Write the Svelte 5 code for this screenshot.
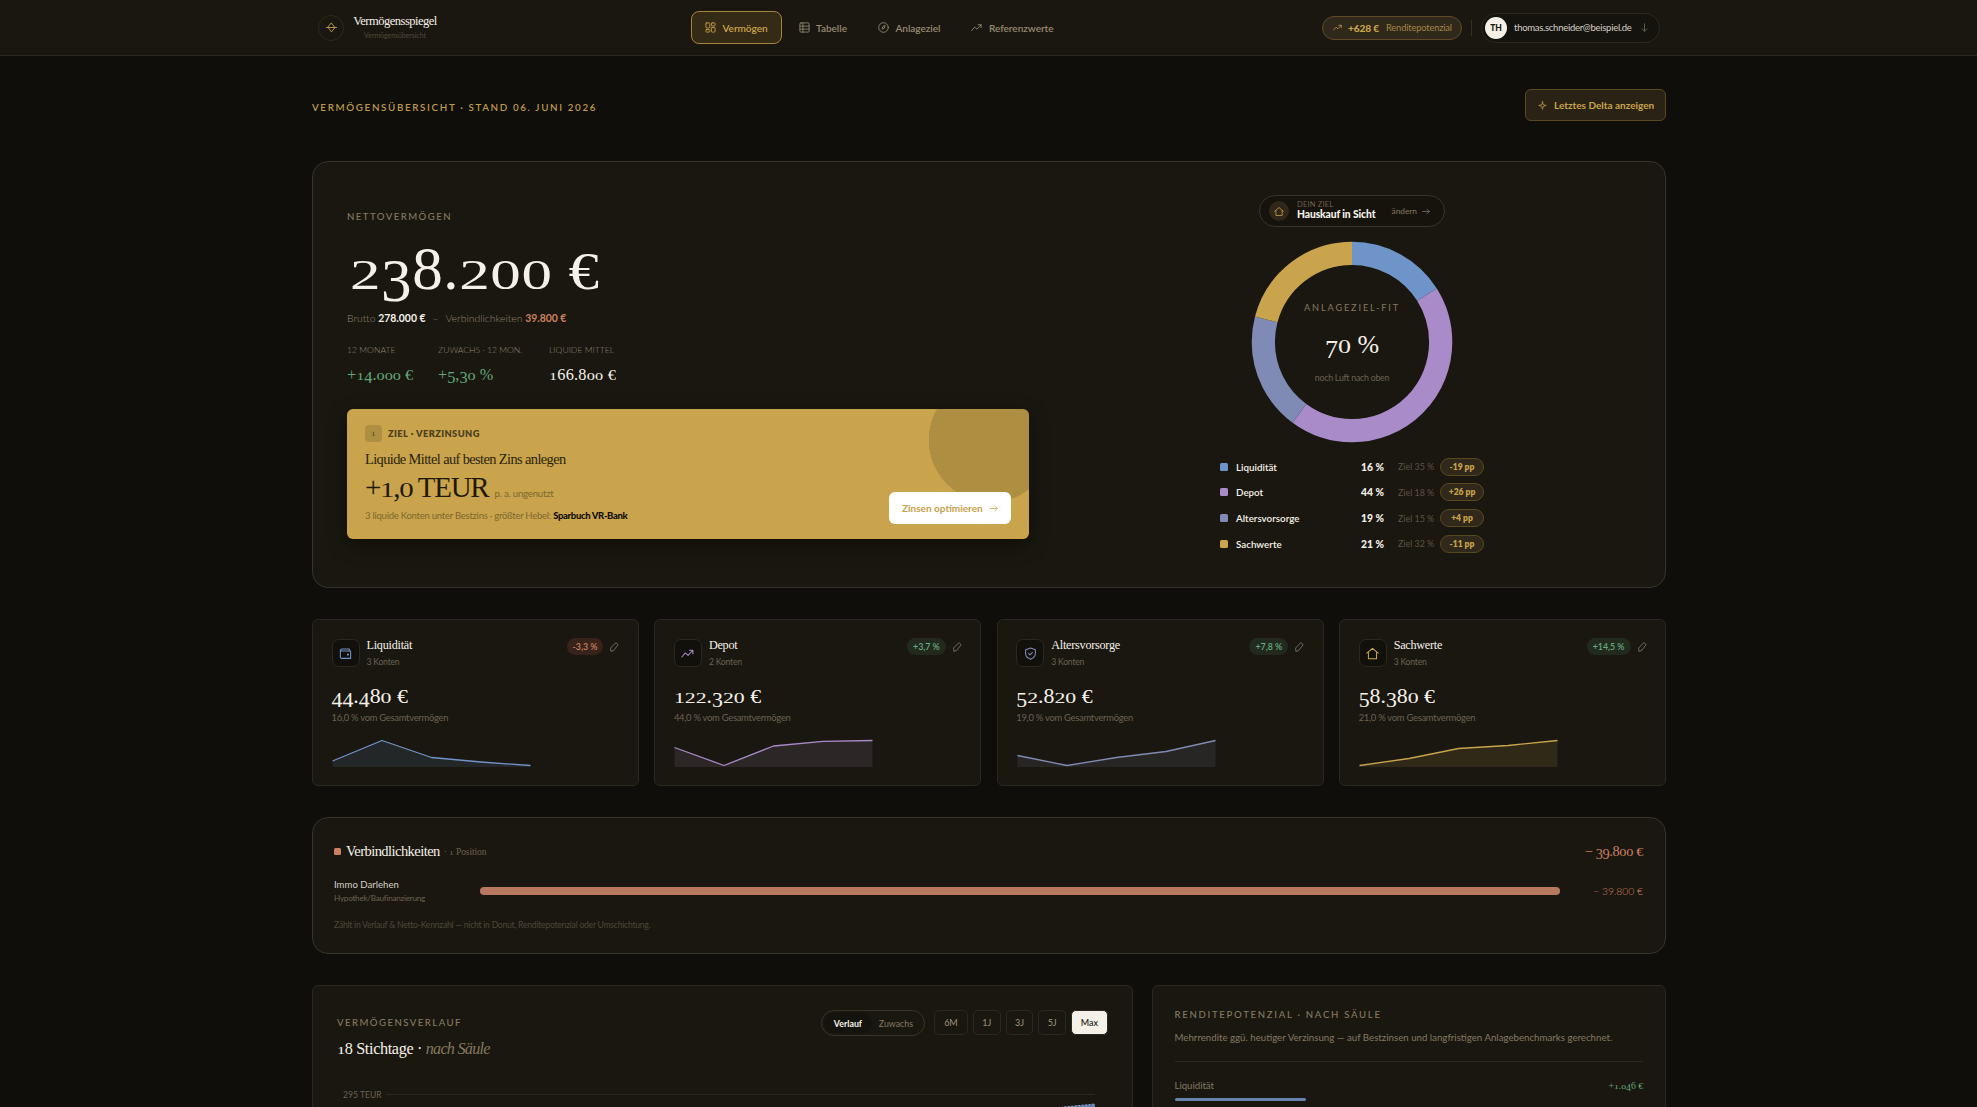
<script lang="ts">
	type Point = [number, number];

	const nav = [
		{ label: 'Vermögen', icon: 'grid' },
		{ label: 'Tabelle', icon: 'table' },
		{ label: 'Anlageziel', icon: 'compass' },
		{ label: 'Referenzwerte', icon: 'trend' }
	];

	const pillars = [
		{ name: 'Liquidität', share: 16, target: 35, diff: '-19 pp', color: '#6f94c9' },
		{ name: 'Depot', share: 44, target: 18, diff: '+26 pp', color: '#a98bca' },
		{ name: 'Altersvorsorge', share: 19, target: 15, diff: '+4 pp', color: '#808bb5' },
		{ name: 'Sachwerte', share: 21, target: 32, diff: '-11 pp', color: '#c9a44c' }
	];

	const cards: {
		name: string;
		icon: string;
		count: number;
		change: string;
		value: string;
		share: string;
		color: string;
		points: Point[];
	}[] = [
		{
			name: 'Liquidität',
			icon: 'wallet',
			count: 3,
			change: '-3,3 %',
			value: '44.480 €',
			share: '16,0',
			color: '#6f94c9',
			points: [[0.5, 22], [50, 1.5], [99.5, 18.5], [149, 23], [198.5, 26.5]]
		},
		{
			name: 'Depot',
			icon: 'trend',
			count: 2,
			change: '+3,7 %',
			value: '122.320 €',
			share: '44,0',
			color: '#a98bca',
			points: [[0.5, 8.5], [50, 26.5], [99.5, 7], [149, 2.3], [198.5, 1.5]]
		},
		{
			name: 'Altersvorsorge',
			icon: 'shield',
			count: 3,
			change: '+7,8 %',
			value: '52.820 €',
			share: '19,0',
			color: '#808bb5',
			points: [[0.5, 16.5], [50, 26.5], [99.5, 18.5], [149, 12.5], [198.5, 1.5]]
		},
		{
			name: 'Sachwerte',
			icon: 'home',
			count: 3,
			change: '+14,5 %',
			value: '58.380 €',
			share: '21,0',
			color: '#c9a44c',
			points: [[0.5, 26.5], [50, 19.5], [99.5, 9.5], [149, 6.5], [198.5, 1.5]]
		}
	];

	const ranges = ['6M', '1J', '3J', '5J', 'Max'];
	let range = $state('Max');
	let mode = $state('Verlauf');

	const R = 88.7;
	const LEN = 2 * Math.PI * R;
	const segments = pillars.map((p, i) => ({
		color: p.color,
		dash: (p.share / 100) * LEN,
		offset: -(pillars.slice(0, i).reduce((sum, x) => sum + x.share, 0) / 100) * LEN
	}));

	const line = (pts: Point[]) => pts.map((p) => p.join(',')).join(' ');

	// old-style figures: 0-2 sit at x-height, 3 4 5 7 9 hang below the baseline
	function figure(ch: string) {
		if ('012'.includes(ch)) return 'low';
		if ('34579'.includes(ch)) return 'hang';
		if (ch === '€') return 'euro';
		return '';
	}
</script>

{#snippet figures(text: string)}{#each text as ch}{#if figure(ch)}<span class="fig {figure(ch)}">{ch}</span>{:else}{ch}{/if}{/each}{/snippet}

{#snippet icon(name: string)}
	<svg class="icon" viewBox="0 0 24 24">
		{#if name === 'grid'}
			<rect x="2" y="2" width="8.500" height="11" rx="1.500" />
			<rect x="14" y="2" width="8" height="6.500" rx="1.500" />
			<rect x="2" y="16.500" width="8.500" height="5.500" rx="1.500" />
			<rect x="14" y="12" width="8" height="10" rx="1.500" />
		{:else if name === 'table'}
			<rect x="2" y="2" width="20" height="20" rx="2" />
			<path d="M2 9h20M2 15.500h20M8.500 2v20" />
		{:else if name === 'compass'}
			<circle cx="12" cy="12" r="10.500" />
			<path d="M15.500 8.500l-2 5-5 2 2-5z" />
		{:else if name === 'trend'}
			<path d="M1.500 18.500l6.500-7.500 5 4.500L22 6M15.500 6H22v6.500" />
		{:else if name === 'wallet'}
			<path d="M19 7.500V3.500H5a2 2 0 0 0 0 4h16.500V21H5a2.500 2.500 0 0 1-2.500-2.500v-13" />
			<circle cx="16.500" cy="14" r="1" />
		{:else if name === 'shield'}
			<path d="M12 2l9 3v7c0 5-3.500 8.500-9 10.500C6.500 20.500 3 17 3 12V5z" />
			<path d="M8.500 12l2.500 2.500 4.500-4.500" />
		{:else if name === 'home'}
			<path d="M1.500 11.500L12 2.500l10.500 9M4.500 10v11.500h15V10" />
		{:else if name === 'pencil'}
			<path d="M15.500 2.500q1.500-1 2.500 0l3 2.500q1 1 0 2.500L11 20.500l-6.500 2L4 15.500z" />
		{:else if name === 'spark'}
			<path d="M12 2l2.200 7.800L22 12l-7.800 2.200L12 22l-2.200-7.800L2 12l7.800-2.200z" />
		{:else if name === 'right'}
			<path d="M2 12h20M15 5l7 7-7 7" />
		{:else if name === 'down'}
			<path d="M12 2v20M5.500 15.500L12 22l6.500-6.500" />
		{:else if name === 'brand'}
			<path d="M12 2.500l7.500 9.500-7.500 9.500L4.500 12zM1 12h22" />
		{/if}
	</svg>
{/snippet}

<header class="topbar">
	<div class="topbar-inner">
		<div class="brand">
			<span class="brand-mark">{@render icon('brand')}</span>
			<div class="brand-text">
				<strong>Vermögensspiegel</strong>
				<small>Vermögensübersicht</small>
			</div>
		</div>

		<nav>
			{#each nav as item, i}
				<a href="#{item.icon}" class:active={i === 0}>
					{@render icon(item.icon)}
					<span>{item.label}</span>
				</a>
			{/each}
		</nav>

		<div class="account">
			<span class="potential">
				{@render icon('trend')}
				<b>+628 €</b>
				<span>Renditepotenzial</span>
			</span>
			<span class="rule"></span>
			<button type="button" class="user">
				<span class="avatar">TH</span>
				<span class="mail">thomas.schneider@beispiel.de</span>
				{@render icon('down')}
			</button>
		</div>
	</div>
</header>

<main>
	<div class="page-head">
		<h1>Vermögensübersicht · Stand 06. Juni 2026</h1>
		<button type="button" class="delta">
			{@render icon('spark')}
			<span>Letztes Delta anzeigen</span>
		</button>
	</div>

	<section class="panel hero">
		<div class="net">
			<div class="eyebrow">Nettovermögen</div>
			<div class="net-value">{@render figures('238.200 €')}</div>
			<div class="gross">
				<span>Brutto <b>278.000 €</b></span>
				<span>–</span>
				<span>Verbindlichkeiten <b class="debt">39.800 €</b></span>
			</div>
			<div class="stats">
				<div class="s1">
					<small>12 Monate</small>
					<strong class="up">{@render figures('+14.000 €')}</strong>
				</div>
				<div class="s2">
					<small>Zuwachs · 12 Mon.</small>
					<strong class="up">{@render figures('+5,30 %')}</strong>
				</div>
				<div class="s3">
					<small>Liquide Mittel</small>
					<strong>{@render figures('166.800 €')}</strong>
				</div>
			</div>

			<div class="banner">
				<div class="banner-text">
					<div class="banner-tag">
						<span class="chip">{@render figures('1')}</span>
						<span>Ziel · Verzinsung</span>
					</div>
					<h2>Liquide Mittel auf besten Zins anlegen</h2>
					<div class="banner-amount">
						<strong>{@render figures('+1,0 TEUR')}</strong>
						<span>p. a. ungenutzt</span>
					</div>
					<p>3 liquide Konten unter Bestzins · größter Hebel: <b>Sparbuch VR-Bank</b></p>
				</div>
				<button type="button" class="optimize">
					<span>Zinsen optimieren</span>
					{@render icon('right')}
				</button>
			</div>
		</div>

		<div class="fit">
			<div class="goal">
				<span class="goal-icon">{@render icon('home')}</span>
				<div class="goal-text">
					<small>Dein Ziel</small>
					<strong>Hauskauf in Sicht</strong>
				</div>
				<span class="change">ändern</span>
				{@render icon('right')}
			</div>

			<div class="donut">
				<svg viewBox="0 0 202 202">
					<g transform="rotate(-90 101 101)">
						{#each segments as s}
							<circle
								cx="101"
								cy="101"
								r={R}
								stroke={s.color}
								stroke-dasharray="{s.dash} {LEN}"
								stroke-dashoffset={s.offset}
							/>
						{/each}
					</g>
				</svg>
				<div class="donut-label">
					<span class="donut-title">Anlageziel-Fit</span>
					<strong>{@render figures('70 %')}</strong>
					<small>noch Luft nach oben</small>
				</div>
			</div>

			<ul class="legend">
				{#each pillars as p}
					<li>
						<i style="background: {p.color}"></i>
						<span class="name">{p.name}</span>
						<b>{p.share} %</b>
						<span class="target">Ziel {p.target} %</span>
						<span class="diff">{p.diff}</span>
					</li>
				{/each}
			</ul>
		</div>
	</section>

	<section class="cards">
		{#each cards as card}
			<article class="card" style="--tone: {card.color}">
				<div class="card-head">
					<span class="card-icon">{@render icon(card.icon)}</span>
					<div class="card-title">
						<strong>{card.name}</strong>
						<small>{card.count} Konten</small>
					</div>
					<span class="badge" class:down={card.change.startsWith('-')}>{card.change}</span>
					<span class="edit">{@render icon('pencil')}</span>
				</div>
				<div class="card-value">{@render figures(card.value)}</div>
				<div class="card-share">{card.share} % vom Gesamtvermögen</div>
				<svg class="spark" viewBox="0 0 199 28">
					<polygon points="0.5,28 {line(card.points)} 198.5,28" />
					<polyline points={line(card.points)} />
				</svg>
			</article>
		{/each}
	</section>

	<section class="panel liabilities">
		<div class="liab-head">
			<i></i>
			<h3>Verbindlichkeiten</h3>
			<small>· {@render figures('1')} Position</small>
			<strong>{@render figures('− 39.800 €')}</strong>
		</div>
		<div class="liab-row">
			<div class="liab-name">
				<span>Immo Darlehen</span>
				<small>Hypothek/Baufinanzierung</small>
			</div>
			<div class="liab-bar"></div>
			<span class="liab-value">− 39.800 €</span>
		</div>
		<p>Zählt in Verlauf &amp; Netto-Kennzahl — nicht in Donut, Renditepotenzial oder Umschichtung.</p>
	</section>

	<div class="bottom">
		<section class="card history">
			<div class="history-head">
				<div>
					<div class="eyebrow">Vermögensverlauf</div>
					<h3>{@render figures('18')} Stichtage · <em>nach Säule</em></h3>
				</div>
				<div class="controls">
					<div class="toggle">
						{#each ['Verlauf', 'Zuwachs'] as m}
							<button type="button" class:active={mode === m} onclick={() => (mode = m)}>{m}</button>
						{/each}
					</div>
					{#each ranges as r}
						<button
							type="button"
							class="range"
							class:active={range === r}
							onclick={() => (range = r)}
						>
							{r}
						</button>
					{/each}
				</div>
			</div>
			<div class="chart">
				<span>295 TEUR</span>
				<svg viewBox="0 0 709 60">
					<path class="gridline" d="M0 8.500H709" />
					<path class="area" d="M0 60L600 40L677 21L709 18V60Z" />
					<path class="area-top" d="M600 40L677 21L709 18" />
				</svg>
			</div>
		</section>

		<section class="card potential-card">
			<div class="eyebrow">Renditepotenzial · nach Säule</div>
			<p>Mehrrendite ggü. heutiger Verzinsung — auf Bestzinsen und langfristigen Anlagebenchmarks gerechnet.</p>
			<div class="yield-row">
				<span>Liquidität</span>
				<strong>{@render figures('+1.046 €')}</strong>
			</div>
			<div class="yield-bar"></div>
		</section>
	</div>
</main>

<style>
	:global(body) {
		background: #0f0e0a;
		overflow: hidden;
	}

	:global(#app) {
		--serif: 'Liberation Serif', serif;
		--gold: #c9a44c;
		--text: #f5f1e8;
		--muted: #6c6250;
		--soft: #928570;
		--line: #2b281f;
		height: 1107px;
		overflow: hidden;
		font-family: Lato, sans-serif;
		font-size: 10px;
		color: var(--text);
	}

	h1,
	h2,
	h3,
	p,
	ul {
		margin: 0;
		padding: 0;
		font-weight: 400;
	}

	button {
		font: inherit;
		color: inherit;
		background: none;
		border: 0;
		padding: 0;
		cursor: pointer;
	}

	.icon {
		width: 11px;
		height: 11px;
		flex: none;
		fill: none;
		stroke: currentColor;
		stroke-width: 1.9;
		stroke-linecap: round;
		stroke-linejoin: round;
	}

	.fig {
		display: inline-block;
		line-height: 1;
		transform-origin: 50% 83.75%;
	}

	.fig.low {
		transform: scaleY(0.7);
	}

	.fig.hang {
		transform: translateY(0.2em);
	}

	.fig.euro {
		transform: scaleY(0.86);
	}

	/* top bar */
	.topbar {
		box-sizing: border-box;
		height: 56px;
		background: #1a1710;
		border-bottom: 1px solid #2b281f;
	}

	.topbar-inner {
		display: grid;
		grid-template-columns: 374px 1fr auto;
		align-items: center;
		width: 1343px;
		height: 55px;
		margin: 0 auto;
	}

	.brand {
		display: flex;
		align-items: center;
		gap: 9px;
		padding-left: 1px;
	}

	.brand-mark {
		display: grid;
		place-items: center;
		width: 24px;
		height: 24px;
		border: 1px solid var(--line);
		border-radius: 50%;
		color: var(--gold);
	}

	.brand-text {
		display: flex;
		flex-direction: column;
		align-items: center;
		width: 84px;
		margin-top: -3px;
	}

	.brand-text strong {
		font: 500 12.5px/16px var(--serif);
		letter-spacing: -0.5px;
	}

	.brand-text small {
		font-size: 7px;
		line-height: 10px;
		margin-top: 1px;
		letter-spacing: -0.06px;
		color: #50483a;
	}

	nav {
		display: flex;
		gap: 3px;
	}

	nav a {
		box-sizing: border-box;
		display: flex;
		align-items: center;
		gap: 6.5px;
		height: 33px;
		padding: 0 13px;
		border: 1px solid transparent;
		border-radius: 8px;
		font-size: 10.1px;
		font-weight: 600;
		letter-spacing: -0.06px;
		color: #958972;
		text-decoration: none;
	}

	nav a.active {
		color: var(--gold);
		background: #342a16;
		border-color: #a3843f;
	}

	.account {
		display: flex;
		align-items: center;
	}

	.potential {
		box-sizing: border-box;
		display: flex;
		align-items: center;
		width: 140px;
		height: 24px;
		padding: 0 0 0 10px;
		border: 1px solid #5d4c23;
		border-radius: 12px;
		background: #30281a;
		color: #a48646;
		font-size: 9.3px;
		letter-spacing: -0.16px;
		white-space: nowrap;
	}

	.potential .icon {
		width: 9px;
		margin-right: 6px;
		color: var(--gold);
	}

	.potential b {
		width: 32px;
		margin-right: 6px;
		font-size: 10.2px;
		font-weight: 900;
		color: var(--gold);
	}

	.rule {
		width: 1px;
		height: 16px;
		margin: 0 9px;
		background: #343026;
	}

	.user {
		box-sizing: border-box;
		display: flex;
		align-items: center;
		width: 179px;
		height: 30px;
		padding: 0 10px 0 3px;
		border: 1px solid var(--line);
		border-radius: 15px;
		background: #15130e;
	}

	.avatar {
		display: grid;
		place-items: center;
		width: 22px;
		height: 22px;
		margin-right: 7px;
		border-radius: 50%;
		background: #f5f1e8;
		color: #1a1710;
		font-size: 8.5px;
		font-weight: 900;
	}

	.mail {
		flex: 1;
		font-size: 9.5px;
		letter-spacing: -0.28px;
		text-align: left;
		color: #d5d0c5;
	}

	.user .icon {
		width: 9px;
		height: 9px;
		color: #807660;
	}

	main {
		width: 1354px;
		margin-left: 312px;
		display: flex;
		flex-direction: column;
	}

	.page-head {
		display: flex;
		justify-content: space-between;
		height: 72px;
		padding-top: 33px;
	}

	h1 {
		margin-top: 12px;
		font-size: 9.8px;
		line-height: 12px;
		font-weight: 600;
		letter-spacing: 1.64px;
		text-transform: uppercase;
		color: #bd9a48;
	}

	.delta {
		box-sizing: border-box;
		display: flex;
		align-items: center;
		gap: 7px;
		width: 141px;
		height: 32px;
		padding: 0 11px 0 12px;
		border: 1px solid #58491f;
		border-radius: 6px;
		background: #2a2315;
		color: var(--gold);
		font-size: 10px;
		font-weight: 700;
		white-space: nowrap;
	}

	.delta .icon {
		width: 9px;
	}

	.panel {
		box-sizing: border-box;
		border: 1px solid #37342a;
		border-radius: 16px;
		background: #1a1710;
	}

	.eyebrow {
		font-size: 9.6px;
		line-height: 12px;
		font-weight: 500;
		letter-spacing: 1.45px;
		text-transform: uppercase;
		color: #85795f;
	}

	/* hero */
	.hero {
		display: grid;
		grid-template-columns: 682px 558px;
		justify-content: space-between;
		height: 427px;
		padding: 33px 34px 0;
	}

	.net {
		padding-top: 16px;
	}

	.net-value {
		margin: 15px 0 0 3px;
		font: 400 61px/61px var(--serif);
		letter-spacing: 0.6px;
	}

	.gross {
		display: flex;
		gap: 7px;
		margin-top: 12px;
		font-size: 10.4px;
		line-height: 14px;
		font-weight: 300;
		color: var(--soft);
	}

	.gross b {
		font-weight: 700;
		color: var(--text);
	}

	.gross b.debt {
		color: #cb8061;
	}

	.stats {
		display: flex;
		margin-top: 19px;
	}

	.stats small {
		display: block;
		font-size: 8.6px;
		line-height: 12px;
		font-weight: 300;
		text-transform: uppercase;
		color: var(--soft);
	}

	.stats strong {
		display: block;
		margin-top: 9px;
		font: 400 16.3px/20px var(--serif);
	}

	.stats .up {
		color: #62a67c;
	}

	.s1 {
		width: 91px;
	}

	.s2 {
		width: 111px;
	}

	.s3 strong {
		letter-spacing: 0.2px;
	}

	.banner {
		box-sizing: border-box;
		display: flex;
		justify-content: space-between;
		align-items: flex-end;
		height: 130px;
		margin-top: 24px;
		padding: 16px 18px 15px;
		border-radius: 6px;
		background: radial-gradient(circle 62.5px at 644px 31px, #ae8e40 62px, #c9a44c 62.5px);
		box-shadow: 0 6px 20px rgba(0, 0, 0, 0.4);
		color: #1a1710;
	}

	.banner-text {
		align-self: flex-start;
	}

	.banner-tag {
		display: flex;
		align-items: center;
		gap: 6px;
		font-size: 9.3px;
		font-weight: 800;
		letter-spacing: 0.4px;
		text-transform: uppercase;
		color: #4f411e;
	}

	.chip {
		display: grid;
		place-items: center;
		width: 17px;
		height: 17px;
		border-radius: 4px;
		background: #ae8e40;
		font: 9px var(--serif);
	}

	.banner h2 {
		margin-top: 8px;
		font: 400 14.4px/18px var(--serif);
		letter-spacing: -0.6px;
		color: #2b230f;
	}

	.banner-amount {
		display: flex;
		align-items: baseline;
		gap: 6px;
		height: 30px;
		margin-top: 4px;
		line-height: 14px;
		font-size: 9.6px;
		letter-spacing: -0.2px;
		color: #7d672f;
	}

	.banner-amount strong {
		font: 400 29px/30px var(--serif);
		letter-spacing: -1.3px;
		color: #1f190b;
	}

	.banner p {
		margin-top: 8px;
		font-size: 9.5px;
		line-height: 12px;
		letter-spacing: -0.24px;
		color: #7d672f;
	}

	.banner p b {
		font-weight: 900;
		letter-spacing: -0.35px;
		color: #100d05;
	}

	.optimize {
		box-sizing: border-box;
		display: flex;
		align-items: center;
		justify-content: space-between;
		width: 122px;
		height: 32px;
		padding: 0 13px;
		border-radius: 6px;
		background: #fff;
		color: #c9a04c;
		font-size: 10px;
		font-weight: 700;
		white-space: nowrap;
	}

	.optimize .icon {
		width: 9px;
	}

	.fit {
		display: flex;
		flex-direction: column;
		align-items: center;
	}

	.goal {
		box-sizing: border-box;
		display: flex;
		align-items: center;
		width: 186px;
		height: 32px;
		padding: 0 14px 0 9px;
		border: 1px solid #37342a;
		border-radius: 16px;
		background: #16130d;
	}

	.goal-icon {
		display: grid;
		place-items: center;
		width: 20px;
		height: 20px;
		border-radius: 50%;
		background: #30271a;
		color: var(--gold);
	}

	.goal-icon .icon {
		width: 10px;
	}

	.goal-text {
		flex: 1;
		margin: -1px 0 0 8px;
		white-space: nowrap;
	}

	.goal-text small {
		display: block;
		font-size: 7.5px;
		line-height: 8px;
		letter-spacing: 0.2px;
		text-transform: uppercase;
		color: var(--muted);
	}

	.goal-text strong {
		display: block;
		font-size: 10.3px;
		line-height: 11px;
		font-weight: 900;
		letter-spacing: -0.1px;
	}

	.change {
		margin-right: 5px;
		font-size: 8.3px;
		color: #857960;
	}

	.goal > .icon {
		width: 8px;
		color: #958972;
	}

	.donut {
		display: grid;
		width: 202px;
		height: 202px;
		margin-top: 14px;
	}

	.donut > * {
		grid-area: 1 / 1;
	}

	.donut circle {
		fill: none;
		stroke-width: 23.2;
	}

	.donut-label {
		display: flex;
		flex-direction: column;
		align-items: center;
		padding-top: 61px;
	}

	.donut-title {
		font-size: 9.2px;
		line-height: 12px;
		letter-spacing: 1.85px;
		text-transform: uppercase;
		color: #85795f;
	}

	.donut-label strong {
		margin-top: 15px;
		font: 400 26px/32px var(--serif);
	}

	.donut-label small {
		margin-top: 11px;
		font-size: 8.8px;
		line-height: 12px;
		letter-spacing: -0.25px;
		color: var(--muted);
	}

	.legend {
		width: 264px;
		margin-top: 14.5px;
		list-style: none;
	}

	.legend li {
		display: grid;
		grid-template-columns: 8px 8px 100px 48px 14px 42px 44px;
		align-items: center;
		height: 18px;
		margin-bottom: 7.8px;
		font-size: 9.8px;
	}

	.legend i {
		width: 8px;
		height: 8px;
		border-radius: 1.5px;
	}

	.legend .name {
		grid-column: 3;
		font-weight: 600;
	}

	.legend b {
		font-size: 10.3px;
		font-weight: 900;
		text-align: right;
	}

	.legend .target {
		grid-column: 6;
		font-size: 8.9px;
		color: #5d5443;
	}

	.diff {
		box-sizing: border-box;
		height: 18px;
		border: 1px solid #58491f;
		border-radius: 9px;
		background: #30281a;
		color: var(--gold);
		font-size: 8.5px;
		font-weight: 800;
		line-height: 16px;
		text-align: center;
	}

	/* pillar cards */
	.cards {
		display: grid;
		grid-template-columns: repeat(4, 1fr);
		gap: 15.5px;
		margin-top: 31px;
	}

	.card {
		box-sizing: border-box;
		border: 1px solid var(--line);
		border-radius: 6px;
		background: #1a1710;
	}

	.cards .card {
		height: 167px;
		padding: 18px 18.5px 0;
	}

	.card-head {
		display: flex;
		align-items: flex-start;
		height: 31px;
	}

	.card-icon {
		box-sizing: border-box;
		display: grid;
		place-items: center;
		width: 28px;
		height: 28px;
		margin-top: 1px;
		border: 1px solid var(--line);
		border-radius: 7px;
		background: #12100b;
		color: var(--tone);
	}

	.card-icon .icon {
		width: 13px;
		height: 13px;
	}

	.card-title {
		flex: 1;
		margin-left: 7px;
	}

	.card-title strong {
		display: block;
		font: 500 12.2px/15px var(--serif);
		letter-spacing: -0.25px;
	}

	.card-title small {
		display: block;
		margin-top: 4px;
		font-size: 8.6px;
		line-height: 10px;
		letter-spacing: -0.2px;
		color: var(--muted);
	}

	.badge {
		padding: 0 6px;
		border-radius: 9px;
		background: #212a1d;
		color: #68ab80;
		font-size: 8.8px;
		font-weight: 600;
		line-height: 17px;
	}

	.badge.down {
		background: #38231a;
		color: #cb8061;
	}

	.edit {
		display: flex;
		margin: 4px 0 0 6px;
		color: #8b806b;
	}

	.edit .icon {
		width: 10px;
		height: 10px;
	}

	.card-value {
		margin-top: 14px;
		font: 500 21.8px/26px var(--serif);
	}

	.card-share {
		margin-top: 3px;
		font-size: 9.4px;
		line-height: 12px;
		letter-spacing: -0.26px;
		color: var(--muted);
	}

	.spark {
		display: block;
		width: 199px;
		height: 28px;
		margin: 15px 0 0 0.5px;
	}

	.spark polyline {
		fill: none;
		stroke: var(--tone);
		stroke-width: 1.3;
		stroke-linejoin: round;
	}

	.spark polygon {
		fill: var(--tone);
		opacity: 0.13;
	}

	/* liabilities */
	.liabilities {
		height: 137px;
		margin-top: 31px;
		padding: 23px 22px 0 21px;
	}

	.liab-head {
		display: flex;
		align-items: center;
		height: 20px;
	}

	.liab-head i {
		width: 7px;
		height: 7px;
		margin-right: 5px;
		border-radius: 1.5px;
		background: #cb8061;
	}

	.liab-head h3 {
		font: 500 14.5px/20px var(--serif);
		letter-spacing: -0.55px;
	}

	.liab-head small {
		margin: 2px 0 0 4px;
		font: 9.5px/16px var(--serif);
		letter-spacing: -0.1px;
		color: var(--muted);
	}

	.liab-head strong {
		margin-left: auto;
		font: 400 14.3px/20px var(--serif);
		letter-spacing: -0.35px;
		color: #cb8061;
	}

	.liab-row {
		display: grid;
		grid-template-columns: 146px 1080px 1fr;
		align-items: center;
		height: 26px;
		margin-top: 15px;
	}

	.liab-name {
		padding-top: 2px;
	}

	.liab-name span {
		display: block;
		font-size: 9.6px;
		line-height: 13px;
		color: #d5d0c5;
	}

	.liab-name small {
		display: block;
		font-size: 8.2px;
		line-height: 13px;
		margin-top: 1px;
		letter-spacing: -0.27px;
		color: var(--muted);
	}

	.liab-bar {
		height: 8px;
		border-radius: 4px;
		background: #b87860;
	}

	.liab-value {
		font-size: 10.3px;
		font-weight: 300;
		text-align: right;
		color: #cb8061;
	}

	.liabilities p {
		margin-top: 17px;
		font-size: 8.6px;
		line-height: 12px;
		letter-spacing: -0.24px;
		color: #4e4737;
	}

	/* bottom */
	.bottom {
		display: grid;
		grid-template-columns: 821px 514px;
		justify-content: space-between;
		margin-top: 31px;
	}

	.history {
		height: 400px;
		padding: 24px 24px 0;
	}

	.history-head {
		display: flex;
		justify-content: space-between;
	}

	.history .eyebrow {
		margin-top: 7px;
	}

	.history h3 {
		margin-top: 9px;
		font: 400 16.2px/22px var(--serif);
		letter-spacing: -0.35px;
	}

	.history em {
		letter-spacing: -0.75px;
		color: #85795f;
	}

	.controls {
		display: flex;
		gap: 5px;
	}

	.toggle {
		box-sizing: border-box;
		display: flex;
		width: 104px;
		height: 26px;
		margin-right: 4px;
		padding: 2px 4px 2px 2px;
		border: 1px solid #37342a;
		border-radius: 13px;
		color: #857960;
		font-size: 8.8px;
	}

	.toggle button {
		flex: 1;
		border-radius: 11px;
	}

	.toggle .active {
		background: #15130e;
		color: var(--text);
		font-weight: 700;
	}

	.range {
		box-sizing: border-box;
		width: 27.7px;
		height: 25px;
		border: 1px solid var(--line);
		border-radius: 5px;
		font-size: 9px;
		font-weight: 500;
		color: #958972;
	}

	.range:first-of-type {
		width: 34px;
	}

	.range.active {
		width: 37px;
		background: #f5f1e8;
		color: #1a1710;
	}

	.chart {
		display: flex;
		margin: 26px 0 0 6px;
		color: var(--muted);
		font-size: 8.6px;
		line-height: 18px;
	}

	.chart span {
		width: 43px;
	}

	.chart svg {
		width: 709px;
		height: 60px;
	}

	.gridline {
		stroke: var(--line);
	}

	.area {
		fill: #5f7bb0;
	}

	.area-top {
		fill: none;
		stroke: #8fa3cb;
		stroke-dasharray: 2 1.5;
	}

	.potential-card {
		height: 400px;
		padding: 23px 22px 0 21.5px;
	}

	.potential-card .eyebrow {
		letter-spacing: 1.7px;
	}

	.potential-card p {
		margin-top: 9px;
		padding-bottom: 17px;
		border-bottom: 1px solid var(--line);
		font-size: 9.7px;
		line-height: 14px;
		color: #857960;
		white-space: nowrap;
	}

	.yield-row {
		display: flex;
		justify-content: space-between;
		margin-top: 17px;
		font-size: 9.6px;
		line-height: 14px;
		color: #857960;
	}

	.yield-row strong {
		font: 500 9.7px/14px var(--serif);
		color: #62a67c;
	}

	.yield-bar {
		width: 131px;
		height: 3px;
		margin-top: 5px;
		border-radius: 2px;
		background: #6882ad;
	}
</style>
